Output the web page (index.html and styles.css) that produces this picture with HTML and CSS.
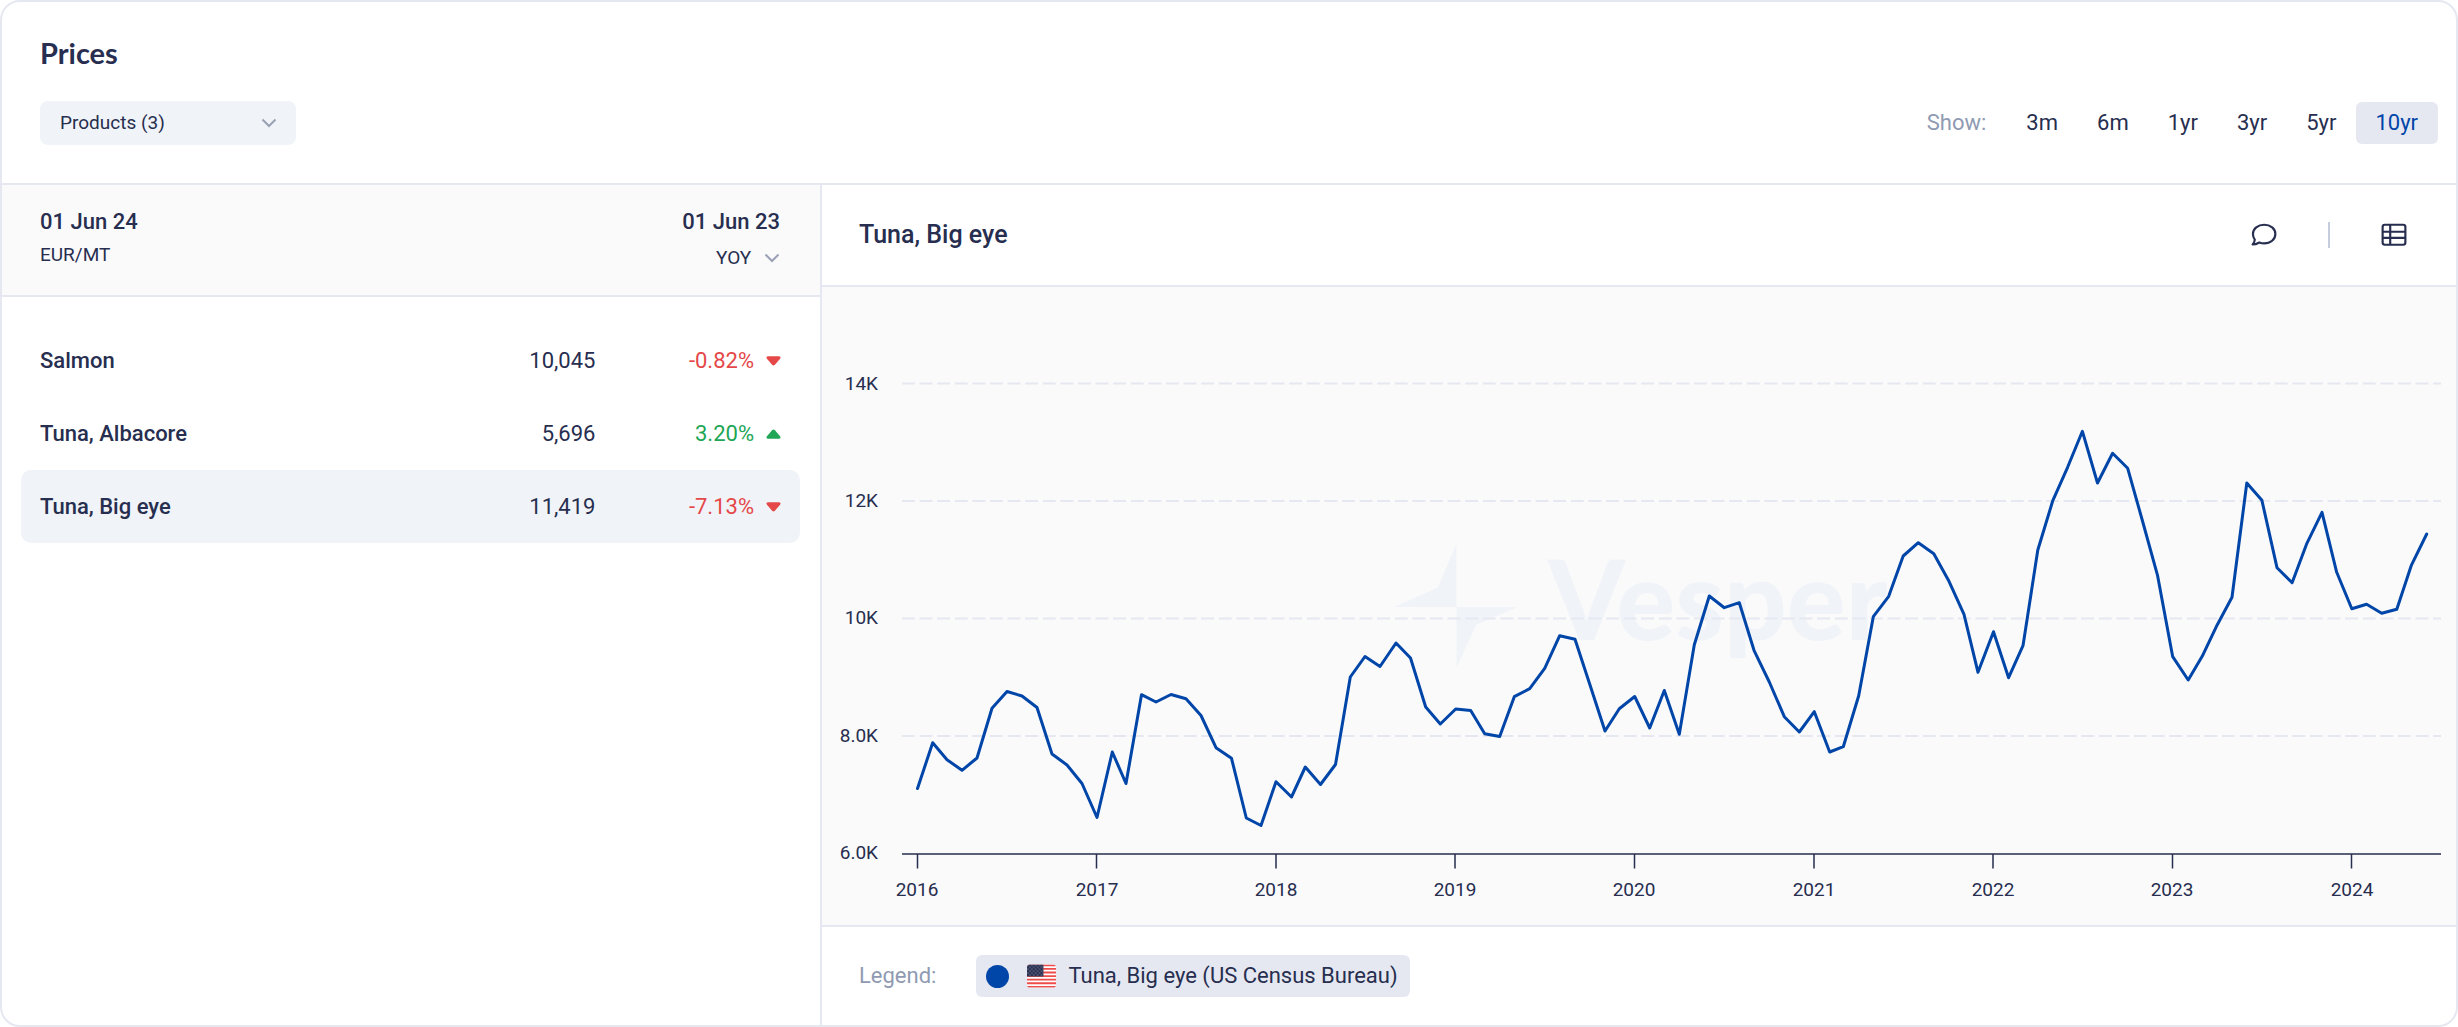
FILE: index.html
```html
<!DOCTYPE html>
<html lang="en">
<head>
<meta charset="utf-8">
<title>Prices</title>
<meta name="viewport" content="width=device-width, initial-scale=1">
<link rel="stylesheet" href="styles.css">
</head>
<body>
<main class="card">
  <header class="card-header">
    <h1 class="card-title">Prices</h1>
    <div class="toolbar">
      <div class="dropdown dropdown-filled">
        <select class="dropdown-select" aria-label="Products"><option>Products (3)</option></select>
        <svg class="chevron" viewBox="0 0 16 10" aria-hidden="true"><path d="M1.500 1.500 8 8l6.500-6.500"/></svg>
      </div>
      <div class="ranges" role="group" aria-labelledby="show-label">
        <span class="muted" id="show-label">Show:</span>
        <div class="range-buttons">
          <button class="range" type="button">3m</button>
          <button class="range" type="button">6m</button>
          <button class="range" type="button">1yr</button>
          <button class="range" type="button">3yr</button>
          <button class="range" type="button">5yr</button>
          <button class="range range-active" type="button" aria-pressed="true">10yr</button>
        </div>
      </div>
    </div>
  </header>

  <div class="panels">
    <section class="list-panel" aria-label="Products">
      <div class="list-header">
        <div class="list-date">
          <strong class="date">01 Jun 24</strong>
          <span class="unit">EUR/MT</span>
        </div>
        <div class="list-date list-date-end">
          <strong class="date">01 Jun 23</strong>
          <div class="dropdown dropdown-plain">
            <select class="dropdown-select" aria-label="Comparison"><option>YOY</option></select>
            <svg class="chevron" viewBox="0 0 16 10" aria-hidden="true"><path d="M1.500 1.500 8 8l6.500-6.500"/></svg>
          </div>
        </div>
      </div>
      <div class="list-body">
        <table class="prices">
          <tbody>
            <tr>
              <th scope="row">Salmon</th>
              <td class="value">10,045</td>
              <td class="change down"><span class="change-inner">-0.82%<svg class="arrow" viewBox="0 0 16 10" aria-hidden="true"><path d="M2 0h12q2.500.5 1 2.500L9.500 9q-1.500 1.500-3 0L1 2.500Q-.5.5 2 0z"/></svg></span></td>
            </tr>
            <tr>
              <th scope="row">Tuna, Albacore</th>
              <td class="value">5,696</td>
              <td class="change up"><span class="change-inner">3.20%<svg class="arrow" viewBox="0 0 16 10" aria-hidden="true"><path d="M2 10h12q2.500-.5 1-2.500L9.500 1q-1.500-1.500-3 0L1 7.500Q-.5 9.500 2 10z"/></svg></span></td>
            </tr>
            <tr class="selected">
              <th scope="row">Tuna, Big eye</th>
              <td class="value">11,419</td>
              <td class="change down"><span class="change-inner">-7.13%<svg class="arrow" viewBox="0 0 16 10" aria-hidden="true"><path d="M2 0h12q2.500.5 1 2.500L9.500 9q-1.500 1.500-3 0L1 2.500Q-.5.5 2 0z"/></svg></span></td>
            </tr>
          </tbody>
        </table>
      </div>
    </section>

    <section class="chart-panel" aria-labelledby="chart-title">
      <div class="chart-header">
        <h2 class="chart-title" id="chart-title">Tuna, Big eye</h2>
        <div class="chart-tools">
          <button class="icon-button" type="button" aria-label="Comments">
            <svg viewBox="0 0 24 24" aria-hidden="true"><path d="M3.500 16.200C2.400 14.700 1.800 13 1.800 11.100 1.800 6.200 6.400 2.500 12.200 2.500s10.300 3.700 10.300 8.600-4.500 8.700-10.300 8.700c-1.600 0-3.100-.3-4.500-.9-1.600.9-3.600 1.900-6.200 1.900 1.200-1.300 2-2.900 2-4.600z"/></svg>
          </button>
          <span class="tool-divider"></span>
          <button class="icon-button" type="button" aria-label="Table view">
            <svg viewBox="0 0 24 24" aria-hidden="true"><rect x="1.500" y="2.500" width="21" height="18.500" rx="2"/><path d="M8.500 2.500V21M1.500 9h21M1.500 14.700h21"/></svg>
          </button>
        </div>
      </div>

      <figure class="chart">
        <svg class="chart-svg" viewBox="822 288 1634 637" role="img" aria-label="Price of Tuna, Big eye from 2016 to 2024">
          <g class="watermark">
            <path d="M1456.500 545 1437.700 588.500 1394 608h62.500zM1456.500 608h61l-41.500 18-19.500 43z"/>
            <text x="1548" y="641">Vesper</text>
          </g>
          <g class="grid">
            <path d="M902 384.500H2441M902 502H2441M902 619.500H2441M902 737H2441"/>
          </g>
          <g class="axis">
            <path d="M902 855H2441M917.500 855v14.500M1096.500 855v14.500M1276 855v14.500M1455 855v14.500M1634.500 855v14.500M1814 855v14.500M1993 855v14.500M2172.500 855v14.500M2351.500 855v14.500"/>
          </g>
          <g class="labels labels-y">
            <text x="878" y="391">14K</text>
            <text x="878" y="508">12K</text>
            <text x="878" y="625">10K</text>
            <text x="878" y="743">8.0K</text>
            <text x="878" y="860">6.0K</text>
          </g>
          <g class="labels labels-x">
            <text x="917" y="897">2016</text>
            <text x="1097" y="897">2017</text>
            <text x="1276" y="897">2018</text>
            <text x="1455" y="897">2019</text>
            <text x="1634" y="897">2020</text>
            <text x="1814" y="897">2021</text>
            <text x="1993" y="897">2022</text>
            <text x="2172" y="897">2023</text>
            <text x="2352" y="897">2024</text>
          </g>
          <polyline class="series" points="917.5,789.5 932.7,743.7 947,760.7 962,771.3 977,759 992,709.3 1007,692.5 1022,697 1037,708.5 1052,755 1067,766 1082,784.5 1097,818.5 1112.3,753 1126,784.5 1141.5,695.7 1156,703 1171,695.5 1186,699.7 1201,716.5 1216,748.7 1231.5,759.3 1246.3,819 1261,826.5 1276,782.7 1291.5,798 1305.3,768 1320.5,785.5 1335.5,765.5 1350.3,678 1365,657.5 1380,667.5 1396,644 1410.5,659 1425.7,708 1440.3,725 1455.7,710 1470.7,711.5 1484.7,734.7 1499.7,737.5 1514.3,697.7 1529.7,689.7 1544.7,669.3 1559.7,636.7 1575,640.3 1590,686 1605,732 1619.3,709.7 1634.7,697.5 1649.7,729 1664.3,691.5 1679.3,735.3 1694.3,645.7 1709.3,597 1724.3,608.7 1739.3,603.7 1754,651.3 1769.3,683 1784.3,717.7 1799.3,733 1814.3,712.7 1829.7,753 1843.3,747.7 1858.7,696.7 1873.3,617.7 1888.7,597.3 1903.2,557 1918.3,543.7 1933.8,554.7 1949,582.3 1964,615.3 1978,673.3 1993.5,632.7 2008.6,678.7 2023,646.7 2037.8,551 2052.9,501.3 2067.6,468.3 2082.4,432.3 2097.5,484 2112.6,454.3 2127.7,469.3 2142.5,522 2157.6,576.7 2172.7,657.7 2188.2,681 2202.2,657.3 2217.3,625.7 2232,598.3 2246.8,484 2261.9,501.3 2277,568.7 2292.1,583.7 2306.9,544.3 2322,513.3 2336.7,573.3 2351.8,609.7 2366.6,605.3 2381.7,614.3 2396.8,610.3 2411.2,566.7 2426.7,535"/>
        </svg>
      </figure>

      <div class="legend">
        <span class="muted">Legend:</span>
        <button class="legend-item" type="button">
          <span class="legend-dot"></span>
          <svg class="flag" viewBox="0 0 30 24" aria-hidden="true">
            <defs>
              <clipPath id="flag-clip"><rect width="30" height="24" rx="3"/></clipPath>
              <pattern id="stars" width="4" height="4" patternUnits="userSpaceOnUse"><rect width="4" height="4" fill="#272e4f"/><circle cx="1" cy="1" r=".7" fill="#8b92ab"/><circle cx="3" cy="3" r=".7" fill="#8b92ab"/></pattern>
            </defs>
            <g clip-path="url(#flag-clip)">
              <rect width="30" height="24" fill="#fff"/>
              <path stroke="#ee4b4b" stroke-width="1.900" d="M0 1h30M0 4.700h30M0 8.400h30M0 12.100h30M0 15.800h30M0 19.500h30M0 23.200h30"/>
              <rect width="17" height="12.500" fill="url(#stars)"/>
            </g>
          </svg>
          <span>Tuna, Big eye (US Census Bureau)</span>
        </button>
      </div>
    </section>
  </div>
</main>
</body>
</html>
```
FILE: styles.css
```css
:root {
  --ink: #272e4f;
  --muted: #8f9ab2;
  --line: #e5e8f0;
  --tint: #f0f4f8;
  --pill: #e5e8f0;
  --surface: #fafafb;
  --blue: #0045a8;
  --red: #e54848;
  --green: #20a655;
}

* {
  box-sizing: border-box;
}

body {
  margin: 0;
  background: #fff;
  color: var(--ink);
  font-family: Roboto, "Liberation Sans", sans-serif;
  font-size: 22px;
  line-height: 28px;
}

button,
select {
  font: inherit;
  color: inherit;
  border: 0;
  background: none;
  padding: 0;
  cursor: pointer;
}

.card {
  display: flex;
  flex-direction: column;
  min-height: 100vh;
  border: 2px solid var(--line);
  border-radius: 20px;
  overflow: hidden;
}

.card-header {
  display: flex;
  flex-direction: column;
  gap: 28px;
  padding: 31px 18px 38px 38px;
  border-bottom: 2px solid var(--line);
}

.card-title {
  margin: 0;
  font-family: Lato, Roboto, sans-serif;
  font-size: 29px;
  line-height: 40px;
  font-weight: 700;
}

.toolbar {
  display: flex;
  align-items: center;
  justify-content: space-between;
}

.dropdown {
  display: grid;
  align-items: center;
}

.dropdown-select {
  grid-area: 1 / 1;
  appearance: none;
  width: 100%;
  font-size: 19px;
  line-height: 24px;
}

.dropdown .chevron {
  grid-area: 1 / 1;
  justify-self: end;
  pointer-events: none;
}

.dropdown-filled {
  width: 256px;
  border-radius: 8px;
  background: var(--tint);
}

.dropdown-filled .dropdown-select {
  height: 44px;
  padding: 0 48px 0 20px;
}

.dropdown-filled .chevron {
  margin-right: 19px;
}

.dropdown-plain .dropdown-select {
  padding-right: 28px;
}

.chevron {
  width: 16px;
  height: 10px;
  fill: none;
  stroke: #9aa1b5;
  stroke-width: 2;
}

.muted {
  color: var(--muted);
}

.ranges {
  display: flex;
  align-items: center;
  gap: 21px;
}

.range-buttons {
  display: flex;
}

.range {
  height: 42px;
  padding: 0 20px 0 19px;
  border-radius: 6px;
}

.range-active {
  background: var(--pill);
  color: var(--blue);
}

.panels {
  flex: 1;
  display: grid;
  grid-template-columns: minmax(0, 1fr) minmax(0, 2fr);
}

.list-header {
  display: flex;
  justify-content: space-between;
  padding: 23px 40px 25px 38px;
  background: var(--surface);
  border-bottom: 2px solid var(--line);
}

.list-date {
  display: flex;
  flex-direction: column;
  gap: 5px;
}

.list-date-end {
  align-items: flex-end;
  gap: 10px;
}

.date {
  font-weight: 500;
}

.unit {
  font-size: 19px;
}

.list-body {
  padding: 27px 20px 27px 19px;
}

.prices {
  width: 100%;
  border-collapse: collapse;
}

.prices th,
.prices td {
  height: 73px;
  padding: 0;
  text-align: right;
}

.prices th {
  padding-left: 19px;
  text-align: left;
  font-weight: 500;
  border-radius: 10px 0 0 10px;
}

.prices .value {
  padding-right: 2px;
}

.prices .change {
  width: 26%;
  padding-right: 19px;
  border-radius: 0 10px 10px 0;
}

.selected > * {
  background: var(--tint);
}

.change-inner {
  display: inline-flex;
  align-items: center;
  gap: 12px;
}

.arrow {
  width: 15px;
  height: 10px;
  fill: currentColor;
}

.up {
  color: var(--green);
}

.down {
  color: var(--red);
}

.chart-panel {
  display: flex;
  flex-direction: column;
  border-left: 2px solid var(--line);
}

.chart-header {
  display: flex;
  align-items: center;
  justify-content: space-between;
  height: 102px;
  padding: 0 49px 0 37px;
  border-bottom: 2px solid var(--line);
}

.chart-title {
  margin: 0;
  font-size: 25px;
  line-height: 32px;
  font-weight: 500;
}

.chart-tools {
  display: flex;
  align-items: center;
  gap: 51px;
}

.icon-button {
  display: flex;
}

.icon-button svg {
  width: 26px;
  height: 26px;
  fill: none;
  stroke: var(--ink);
  stroke-width: 2;
  stroke-linejoin: round;
}

.tool-divider {
  width: 2px;
  height: 26px;
  background: #c5ccdb;
}

.chart {
  flex: 1;
  margin: 0;
  background: var(--surface);
  border-bottom: 2px solid var(--line);
}

.chart-svg {
  display: block;
  width: 100%;
  height: auto;
}

.watermark {
  fill: var(--tint);
  font-family: Lato, Roboto, sans-serif;
  font-size: 110px;
  font-weight: 900;
}

.grid {
  fill: none;
  stroke: #e5e8f0;
  stroke-width: 2;
  stroke-dasharray: 12.900 4.700;
}

.axis {
  fill: none;
  stroke: var(--ink);
  stroke-width: 1.500;
}

.labels {
  fill: var(--ink);
  font-size: 19px;
}

.labels-y {
  text-anchor: end;
}

.labels-x {
  text-anchor: middle;
}

.series {
  fill: none;
  stroke: var(--blue);
  stroke-width: 3;
  stroke-linejoin: round;
  stroke-linecap: round;
}

.legend {
  display: flex;
  align-items: center;
  gap: 40px;
  height: 98px;
  padding: 0 37px;
}

.legend-item {
  display: flex;
  align-items: center;
  height: 42px;
  padding: 0 12px 0 10px;
  border-radius: 6px;
  background: var(--pill);
}

.legend-dot {
  width: 23px;
  height: 23px;
  margin-right: 18px;
  border-radius: 50%;
  background: var(--blue);
}

.flag {
  width: 29px;
  height: 24px;
  margin-right: 12px;
}
```
